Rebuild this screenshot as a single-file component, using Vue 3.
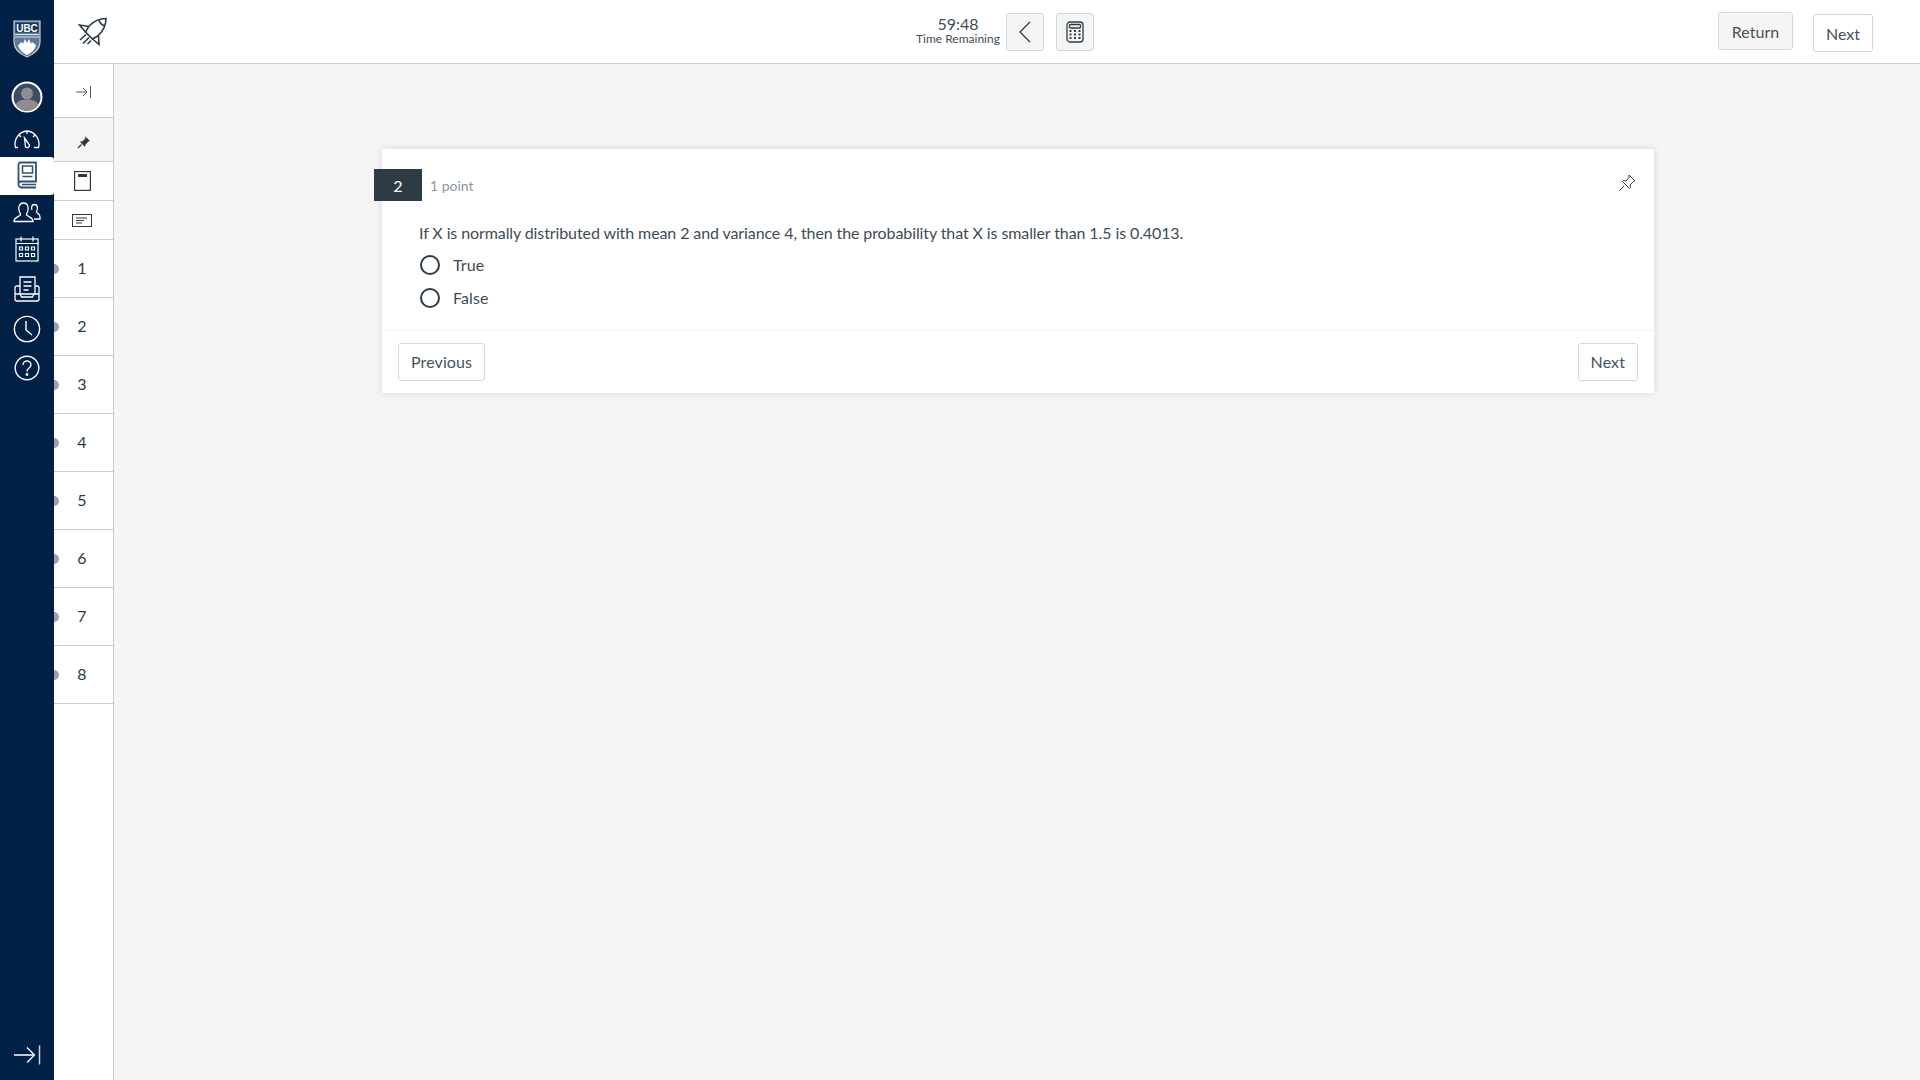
<template>
  <div class="app">
    <nav class="global-nav">
      <div class="logo">
        <svg width="30" height="40" viewBox="0 0 30 40">
          <path d="M2 2h26v21c0 8-6 12-13 15C8 35 2 31 2 23z" fill="#5f7893" stroke="#c3ccd8" stroke-width="1.200" />
          <rect x="3.500" y="3.500" width="23" height="10" fill="#16365a" />
          <text x="15" y="12.500" class="ubc-text" text-anchor="middle">UBC</text>
          <path d="M3 15.500h24M3 18h24" stroke="#dfe5ec" stroke-width="1" />
          <path d="M6 26l4-3 1 2 2-5 2 4 2-4 2 5 1-2 4 3c-1 5-5 8-9 10-4-2-8-5-9-10z" fill="#fff" />
        </svg>
      </div>
      <div class="nav-item avatar-wrap">
        <svg width="32" height="32" viewBox="0 0 32 32">
          <circle cx="16" cy="16" r="14.500" fill="#3a4d63" stroke="#fff" stroke-width="2" />
          <circle cx="16" cy="12.500" r="6" fill="#8c8e91" />
          <path d="M4.500 24c2-4.500 6.500-5.500 11.500-5.500s9.500 1 11.500 5.500a14 14 0 0 1-23 0z" fill="#8c8e91" />
        </svg>
      </div>
      <div class="nav-item dash">
        <svg width="28" height="20" viewBox="0 0 28 20" fill="none" stroke="#fff" stroke-width="1.300">
          <path d="M5 18.500H2.500A13 13 0 0 1 14 2a13 13 0 0 1 11.500 16.500H21" />
          <path d="M11.500 9l5 7a2.400 2.400 0 0 1-4 2z" />
          <path d="M14 2v3M6 6l2 2M22 6l-2 2" />
        </svg>
      </div>
      <div class="nav-item courses">
        <svg width="22" height="30" viewBox="0 0 22 30" fill="none" stroke="#2d5277" stroke-width="1.800">
          <path d="M2.500 23V3.500a2 2 0 0 1 2-2H20v19H5a2.500 2.500 0 0 0-2.500 2.500A3 3 0 0 0 5 26.500h15" />
          <rect x="6.500" y="5" width="10" height="7" stroke-width="1.500" />
          <path d="M6.500 15.500h10M6 23.500h14" stroke-width="1.500" />
        </svg>
      </div>
      <div class="nav-item people">
        <svg width="28" height="22" viewBox="0 0 28 22" fill="none" stroke="#fff" stroke-width="1.300">
          <path d="M1 20.500c0-4 3-4 6-6 1-1 .5-2-.5-3.500-1.500-3-1-9 4-9s5.500 6 4 9c-1 1.500-1.500 2.500-.5 3.500 3 2 6 2 6 6z" />
          <path d="M19 9c-1-2-.5-5.500 2.500-5.500S25 7 24 9c-.8 1.200-.8 2 0 2.700 1.500 1 3 1.500 3 4.300v2h-6" />
        </svg>
      </div>
      <div class="nav-item calendar">
        <svg width="24" height="26" viewBox="0 0 24 26" fill="none" stroke="#fff" stroke-width="1.200">
          <rect x="1" y="3" width="22" height="22" />
          <path d="M1 7.500h22M6 .5v5M18 .5v5" />
          <path d="M4.500 11h3v3h-3zM10.500 11h3v3h-3zM16.500 11h3v3h-3zM4.500 17.500h3v3h-3zM10.500 17.500h3v3h-3zM16.500 17.500h3v3h-3z" />
        </svg>
      </div>
      <div class="nav-item inbox">
        <svg width="26" height="26" viewBox="0 0 26 26" fill="none" stroke="#fff" stroke-width="1.300">
          <path d="M6 18V1h15v17z" />
          <path d="M9.500 6h8M9.500 10h8M9.500 14h5" />
          <path d="M6 10H3a2 2 0 0 0-2 2v11a2 2 0 0 0 2 2h20a2 2 0 0 0 2-2V12a2 2 0 0 0-2-2h-2" />
          <path d="M1 18h5l1.500 3h11l1.500-3h5" />
        </svg>
      </div>
      <div class="nav-item clock">
        <svg width="28" height="28" viewBox="0 0 28 28" fill="none" stroke="#fff" stroke-width="1.400">
          <circle cx="14" cy="14" r="12.600" />
          <path d="M13 6v9l6 5" />
        </svg>
      </div>
      <div class="nav-item help">
        <svg width="26" height="26" viewBox="0 0 26 26" fill="none" stroke="#fff" stroke-width="1.400">
          <circle cx="13" cy="13" r="11.800" />
          <path d="M9 10c0-2.500 2-4 4-4s4 1.500 4 3.800c0 3.200-4 3.200-4 6.700" />
          <circle cx="13" cy="19.500" r=".7" fill="#fff" />
        </svg>
      </div>
      <div class="nav-item nav-collapse">
        <svg width="28" height="20" viewBox="0 0 28 20" fill="none" stroke="#fff" stroke-width="1.300">
          <path d="M1 10h20M14 2.500l7.500 7.500-7.500 7.500" />
          <path d="M26.500 0.500v19" stroke="#cdd3da" stroke-width="1.500" />
        </svg>
      </div>
    </nav>

    <div class="content">
      <header class="top-bar">
        <div class="rocket">
          <svg width="30" height="30" viewBox="0 0 30 30" fill="none" stroke="#2d3b45" stroke-width="1.600">
            <path d="M28 1.500c-6 0-12 2.500-17 7.500l-3.500 6 7 7 6-3.500c5-5 7.500-11 7.500-17z" />
            <path d="M21 3c.5 2.500 3 5 6 6" />
            <path d="M10.500 9.500L1.500 8l6 7M20.500 19l.5 8.500-6.500-5.500" />
            <path d="M8 17.500L2 23M11 20.500L5 26.500M13 23.500L9.500 27" />
          </svg>
        </div>
        <div class="timer-group">
          <div class="timer">
            <span class="time">59:48</span>
            <span class="time-label">Time Remaining</span>
          </div>
          <button class="btn icon-btn">
            <svg width="14" height="22" viewBox="0 0 14 22" fill="none" stroke="#2d3b45" stroke-width="1.300">
              <path d="M12 1L2 11l10 10" />
            </svg>
          </button>
          <button class="btn icon-btn">
            <svg width="18" height="22" viewBox="0 0 18 22" fill="none" stroke="#2d3b45" stroke-width="1.300">
              <rect x="1" y="1" width="16" height="20" rx="3" />
              <rect x="3.500" y="3.500" width="11" height="3.500" rx="1" />
              <path d="M3.500 10h2M8 10h2M12.500 10h2M3.500 13.500h2M8 13.500h2M12.500 13.500h2M3.500 17h2M8 17h2M12.500 17h2" stroke-width="2" />
            </svg>
          </button>
        </div>
        <div class="top-actions">
          <button class="btn return-btn">Return</button>
          <button class="btn next-top">Next</button>
        </div>
      </header>

      <div class="body-row">
        <aside class="question-nav">
          <div class="side-row collapse-row">
            <svg width="16" height="12" viewBox="0 0 16 12" fill="none" stroke="#4f5c66" stroke-width="1">
              <path d="M0 6h11M7 2l4 4-4 4" />
              <path d="M14.500 0v12" />
            </svg>
          </div>
          <div class="side-row pin-row">
            <svg width="14" height="14" viewBox="0 0 14 14" fill="#2d3b45">
              <path d="M8 1l5 5-1.500.5-3 3L8 12 2.800 6.800l2.700-.5 3-3z" />
              <path d="M4.500 9.500L1 13" stroke="#2d3b45" stroke-width="1.200" />
            </svg>
          </div>
          <div class="side-row page-row">
            <svg width="17" height="20" viewBox="0 0 17 20" fill="none" stroke="#2d3b45" stroke-width="1.200">
              <rect x=".6" y=".6" width="15.800" height="18.800" />
              <rect x="4" y="3" width="9" height="3" fill="#2d3b45" stroke="none" />
            </svg>
          </div>
          <div class="side-row note-row">
            <svg width="20" height="13" viewBox="0 0 20 13" fill="none" stroke="#2d3b45" stroke-width="1">
              <rect x=".5" y=".5" width="19" height="12" />
              <path d="M4 4h11M4 6.500h8M4 9h6" />
            </svg>
          </div>
          <div v-for="n in questions" :key="n" class="side-row num-row">
            <span class="dot"></span>
            <span>{{ n }}</span>
          </div>
        </aside>

        <main class="main">
          <section class="card">
            <div class="card-head">
              <span class="badge">2</span>
              <span class="points">1 point</span>
              <svg class="pin" width="17" height="17" viewBox="0 0 17 17" fill="none" stroke="#2d3b45" stroke-width="1">
                <path d="M10 1l6 6-1.500.5-3.500 3.500.5 2.500-1 1-7-7 1-1 2.500.5L10 3.500z" />
                <path d="M5 12L.5 16.500" />
              </svg>
            </div>
            <div class="card-body">
              <p class="question">If X is normally distributed with mean 2 and variance 4, then the probability that X is smaller than 1.5 is 0.4013.</p>
              <label v-for="o in options" :key="o" class="option">
                <span class="radio"></span>
                <span>{{ o }}</span>
              </label>
            </div>
            <div class="card-foot">
              <button class="btn foot-btn">Previous</button>
              <button class="btn foot-btn">Next</button>
            </div>
          </section>
        </main>
      </div>
    </div>
  </div>
</template>

<script setup>
const questions = [1, 2, 3, 4, 5, 6, 7, 8]
const options = ['True', 'False']
</script>

<style scoped>
.app {
  display: flex;
  width: 1920px;
  height: 1080px;
  overflow: hidden;
  font-family: Lato, "Open Sans", sans-serif;
  color: #3f4b55;
  background: #f5f5f5;
}

/* global nav */
.global-nav {
  width: 54px;
  flex: none;
  background: #002145;
  display: flex;
  flex-direction: column;
  align-items: center;
}
.logo {
  height: 80px;
  padding-top: 19px;
  box-sizing: border-box;
}
.ubc-text {
  font-family: "Liberation Sans", sans-serif;
  font-size: 10px;
  font-weight: 700;
  fill: #fff;
}
.nav-item {
  width: 54px;
  display: flex;
  align-items: center;
  justify-content: center;
}
.avatar-wrap { height: 34px; }
.dash { height: 43px; padding-top: 7px; box-sizing: border-box; }
.courses {
  height: 38px;
  background: #fff;
  border-radius: 0 3px 3px 0;
}
.people { height: 34px; }
.calendar { height: 40px; }
.inbox { height: 40px; }
.clock { height: 40px; }
.help { height: 38px; }
.nav-collapse {
  margin-top: auto;
  height: 50px;
}

.content {
  flex: 1;
  display: flex;
  flex-direction: column;
  min-width: 0;
}

/* top bar */
.top-bar {
  height: 64px;
  flex: none;
  box-sizing: border-box;
  background: #fff;
  border-bottom: 1px solid #c7cdd1;
  display: flex;
  align-items: center;
}
.rocket {
  margin-left: 24px;
  display: flex;
}
.timer-group {
  margin-left: 808px;
  display: flex;
  align-items: center;
  gap: 12px;
}
.timer {
  display: flex;
  flex-direction: column;
  align-items: center;
  margin-right: -6px;
  line-height: 1;
  margin-top: -2px;
}
.time {
  font-size: 16px;
  line-height: 17px;
}
.time-label {
  font-size: 12px;
  line-height: 14px;
}
.btn {
  font-family: inherit;
  font-size: 16px;
  color: #46525c;
  height: 38px;
  box-sizing: border-box;
  background: #fff;
  border: 1px solid #d3d8db;
  border-radius: 3px;
  padding: 0 12px;
}
.icon-btn {
  width: 38px;
  padding: 0;
  background: #f5f5f5;
  display: flex;
  align-items: center;
  justify-content: center;
}
.top-actions {
  margin-left: auto;
  margin-right: 47px;
  margin-top: 1px;
  display: flex;
  align-items: flex-start;
  gap: 20px;
}
.return-btn {
  background: #f5f5f5;
  width: 75px;
  padding: 0;
}
.next-top {
  width: 60px;
  padding: 0;
  margin-top: 2px;
}
.foot-btn {
  letter-spacing: 0.1px;
  padding: 0 12px 2px;
}

/* question nav */
.body-row {
  flex: 1;
  display: flex;
  min-height: 0;
}
.question-nav {
  width: 60px;
  flex: none;
  box-sizing: border-box;
  background: #fff;
  border-right: 1px solid #c7cdd1;
}
.side-row {
  display: flex;
  align-items: center;
  justify-content: center;
  box-sizing: border-box;
  border-bottom: 1px solid #c7cdd1;
  position: relative;
}
.collapse-row { height: 54px; padding: 2px 0 0 1px; }
.pin-row { height: 44px; background: #f5f5f5; padding-top: 4px; }
.page-row { height: 39px; padding-right: 3px; }
.note-row { height: 39px; padding-right: 3px; }
.num-row {
  height: 58px;
  font-size: 16px;
  padding: 0 3px 2px 0;
  color: #2d3b45;
}
.dot {
  position: absolute;
  left: 0;
  top: 24px;
  width: 5px;
  height: 10px;
  border-radius: 0 5px 5px 0;
  background: #9ba3a9;
}

/* main */
.main {
  flex: 1;
  padding: 85px 0 0 268px;
  min-width: 0;
}
.card {
  width: 1272px;
  height: 244px;
  box-sizing: border-box;
  background: #fff;
  box-shadow: 0 0 8px rgba(0, 0, 0, 0.12);
  display: flex;
  flex-direction: column;
}
.card-head {
  display: flex;
  align-items: center;
  margin-top: 20px;
  height: 32px;
}
.badge {
  width: 48px;
  height: 32px;
  margin-left: -8px;
  background: #2d3b45;
  color: #fff;
  font-size: 16px;
  display: flex;
  align-items: center;
  justify-content: center;
}
.points {
  margin-left: 8px;
  font-size: 14px;
  color: #8b969e;
}
.pin {
  margin-left: auto;
  margin-right: 18px;
  margin-top: -5px;
}
.card-body {
  flex: 1;
  padding: 22px 0 0 37px;
  font-size: 16px;
}
.question {
  margin: 0;
  line-height: 20px;
  letter-spacing: -0.1px;
}
.option {
  display: flex;
  align-items: center;
  height: 33px;
  gap: 13px;
  padding-left: 1px;
  letter-spacing: 0.1px;
}
.question + .option { margin-top: 5px; }
.radio {
  width: 20px;
  height: 20px;
  box-sizing: border-box;
  border: 2px solid #2d3b45;
  border-radius: 50%;
}
.card-foot {
  height: 63px;
  box-sizing: border-box;
  border-top: 1px solid #f2f3f4;
  display: flex;
  align-items: center;
  justify-content: space-between;
  padding: 0 16px;
}
</style>

<style>
html, body {
  margin: 0;
  background: #f5f5f5;
}
</style>
